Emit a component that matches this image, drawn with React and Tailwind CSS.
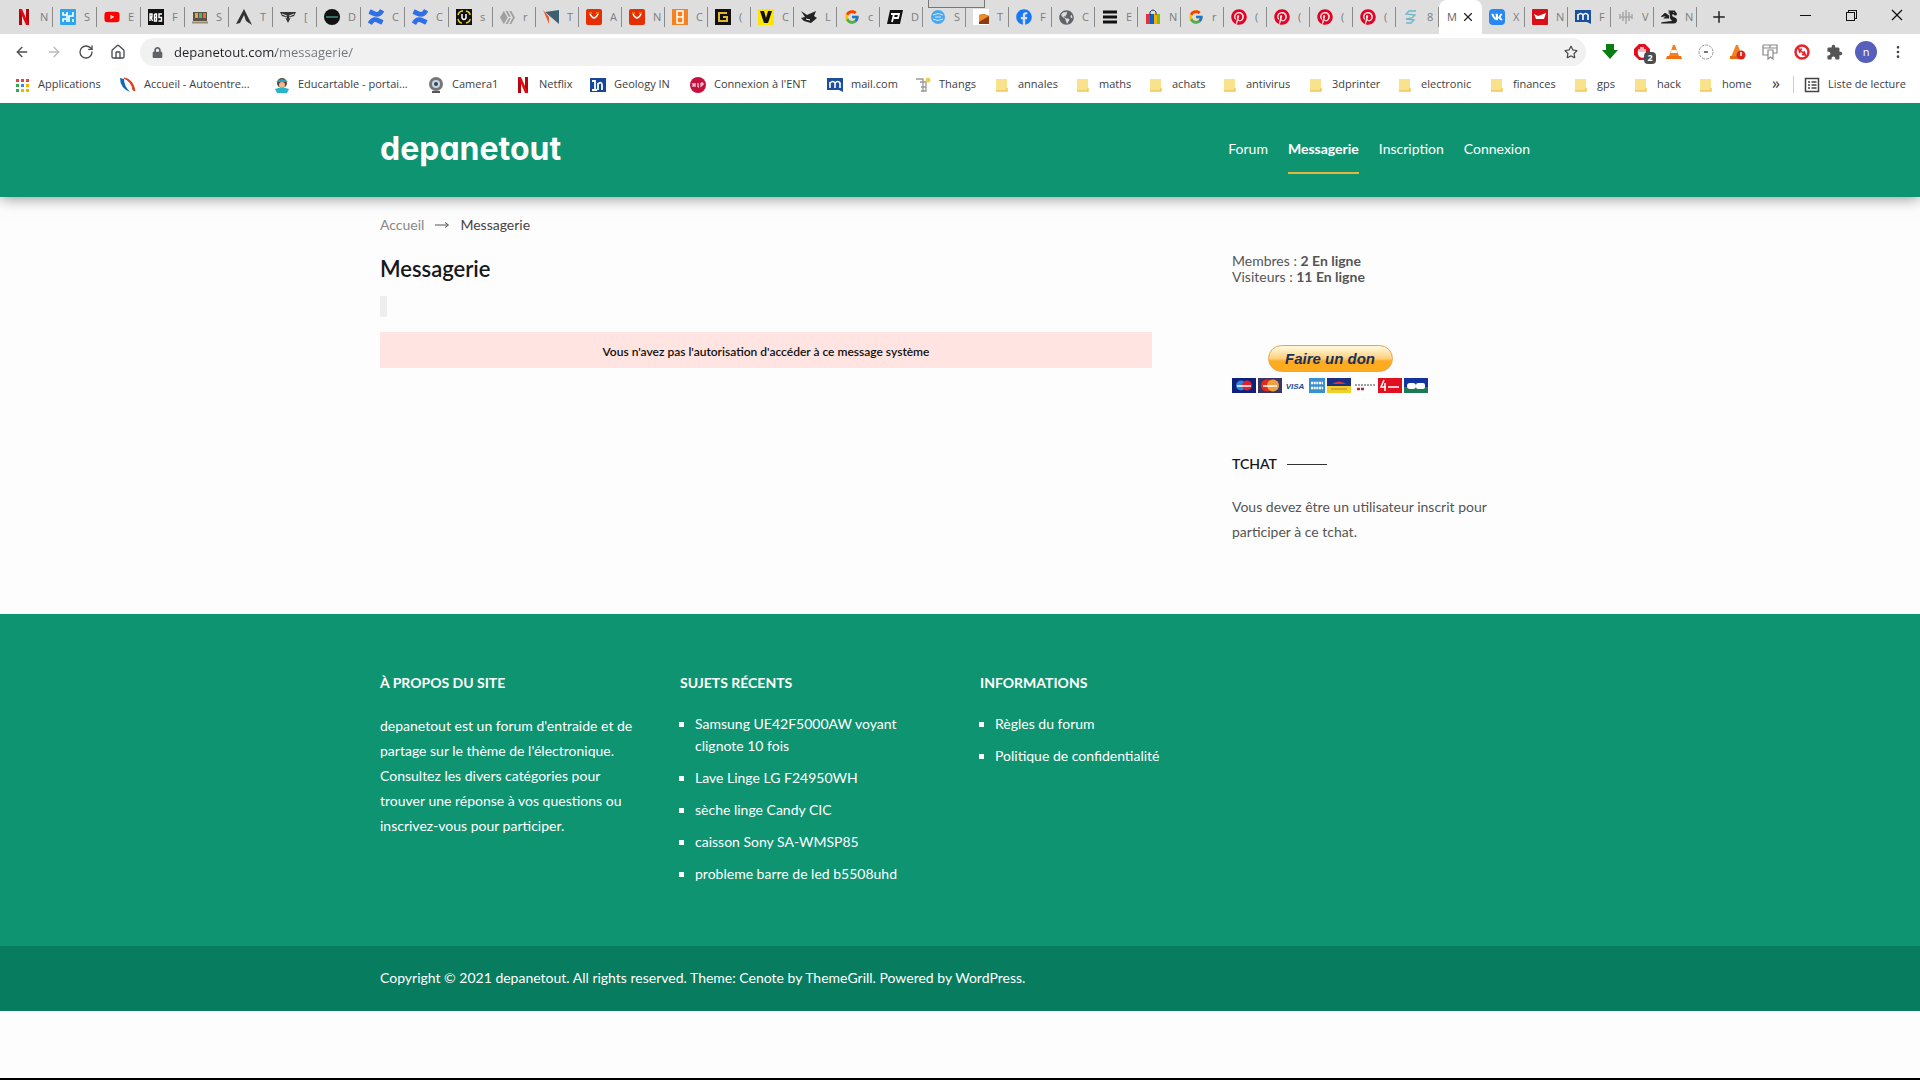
import { FaFacebook, FaPinterest, FaVk, FaYoutube, FaGlobeAmericas, FaDragon, FaRegStar, FaLock, FaHive } from "react-icons/fa";
import { FcGoogle } from "react-icons/fc";
import { MdExtension } from "react-icons/md";
import { SiNetflix, SiConfluence } from "react-icons/si";
import { VscChromeMinimize, VscChromeRestore, VscChromeClose } from "react-icons/vsc";
import { ArrowLeft, ArrowRight, RotateCw, House, Plus, X, EllipsisVertical } from "lucide-react";

/* ---------- favicons ---------- */

const Svg = ({ children, size = 16 }) => (
  <svg width={size} height={size} viewBox="0 0 16 16" className="shrink-0" aria-hidden="true">{children}</svg>
);

const Netflix = () => (
  <Svg>
    <path d="M3 0h3v16H3zM10 0h3v16h-3z" fill="#b1060f" />
    <path d="M3 0h3l7 16h-3z" fill="#e50914" />
  </Svg>
);

const BlueS = () => (
  <Svg>
    <rect width="16" height="16" rx="1" fill="#2ba5f0" />
    <path d="M3 3v3h4M3 13v-3h3M7 3v10M13 3v4H9v6M13 10v3" stroke="#fff" strokeWidth="1.6" fill="none" />
  </Svg>
);
const Rbs = () => (
  <Svg>
    <rect width="16" height="16" fill="#111" />
    <path d="M2 12V5h2v3H2m1 0l1.500 4M6.500 5v7h2V5h-2m0 3.500h2M14 5h-3v3.500h2.500V12h-3" stroke="#fff" strokeWidth="1.400" fill="none" />
  </Svg>
);
const Shop = () => (
  <Svg>
    <path d="M1 3h14v9H1z" fill="#5a5048" />
    <rect x="3" y="4" width="3" height="5" fill="#e8a33a" />
    <rect x="7" y="4" width="3" height="5" fill="#4fb56b" />
    <rect x="11" y="4" width="3" height="5" fill="#e0703a" />
    <path d="M0 13.500h16" stroke="#9a8a70" strokeWidth="2" />
  </Svg>
);
const Arrowhead = () => <Svg><path d="M8 0l8 16-6-4-2-6-4 8-4 1z" fill="#333" /></Svg>;
const Wings = () => (
  <Svg>
    <path d="M0 3h16l-2 4-3 1-3 6-3-6-3-1z" fill="#333" />
    <path d="M2 5l5 2M14 5L9 7M5 8l2 1M11 8l-2 1" stroke="#ddd" fill="none" />
  </Svg>
);
const BlackDisc = () => <Svg><circle cx="8" cy="8" r="8" fill="#111" /><path d="M2 8h12" stroke="#3f8f86" strokeWidth="1.500" /></Svg>;
const Confluence = () => <SiConfluence size={16} color="#2f6fe8" className="shrink-0" />;
const YellowU = () => (
  <Svg>
    <rect width="16" height="16" fill="#111" />
    <path d="M2 6Q3 2 7 2M10 2q4 1 4 4M2 10q1 4 4 4M10 14q4-1 4-4" stroke="#e8d21e" strokeWidth="1.500" fill="none" />
    <path d="M6 5v4q2 3 4 0V5" stroke="#fff" strokeWidth="1.500" fill="none" />
  </Svg>
);
const GreyCloud = () => <FaHive size={15} color="#a0a0a0" className="shrink-0" />;
const Telescope = () => (
  <Svg>
    <path d="M0 1l6 14V8z" fill="#f05a30" />
    <path d="M2 3l14-2v14z" fill="#3d6070" />
  </Svg>
);
const Ali = () => (
  <Svg>
    <rect width="16" height="16" rx="2" fill="#e62e04" />
    <path d="M4 5q4 8 8 0" stroke="#fff" strokeWidth="1.500" fill="none" />
    <path d="M3 4h3M10 4h3" stroke="#f7b500" />
  </Svg>
);
const OrangeB = () => (
  <Svg>
    <rect width="16" height="16" fill="#f58220" />
    <path d="M5 2h6v12H5zM5 8h6" stroke="#fff" strokeWidth="1.500" fill="none" />
  </Svg>
);
const GoldG = () => (
  <Svg>
    <rect width="16" height="16" fill="#111" />
    <path d="M12 4H4v8h8V8H8" stroke="#e3b72c" strokeWidth="2" fill="none" />
  </Svg>
);
const YellowV = () => <Svg><rect width="16" height="16" fill="#ffe600" /><path d="M2 2h4l2 7 2-7h4l-4 12H6z" fill="#111" /></Svg>;
const Fox = () => <Svg><path d="M0 2l6 4 9-4-2 5 3 2-6 5-7-2-3-3 4-1z" fill="#222" /><path d="M5 10l4 1" stroke="#fff" /></Svg>;
const Google = () => <FcGoogle size={16} className="shrink-0" />;
const DarkP = () => (
  <Svg>
    <path d="M3 1h13l-3 14H0z" fill="#111" />
    <path d="M4 5h8l-1 4H7M7 5L5 13" stroke="#fff" strokeWidth="1.800" fill="none" />
  </Svg>
);
const BlueGlobe = () => (
  <Svg>
    <circle cx="8" cy="8" r="7" fill="#4aa8f0" />
    <path d="M3 6q5-3 10 0M3 10q5 3 10 0M5 8h6" stroke="#cfe8ff" fill="none" />
  </Svg>
);
const Cube = () => (
  <Svg>
    <rect width="16" height="16" fill="#fff" />
    <path d="M6 6l5-1 5 2v8H6z" fill="#8a3b12" />
    <path d="M6 6l5-1 5 2-10 6z" fill="#f08a24" />
  </Svg>
);
const Facebook = () => <FaFacebook size={16} color="#1877f2" className="shrink-0" />;
const GreyGlobe = () => <FaGlobeAmericas size={15} color="#5f6368" className="shrink-0" />;
const Bars = () => <Svg><path d="M1 3h14M1 8h14M1 13h14" stroke="#111" strokeWidth="3" /></Svg>;
const Bag = () => (
  <Svg>
    <path d="M1 5h4v10H1z" fill="#e53238" />
    <path d="M5 5h4v10H5z" fill="#0064d2" />
    <path d="M9 5h3v10H9z" fill="#f5af02" />
    <path d="M12 5h3v10h-3z" fill="#86b817" />
    <path d="M5 6V3q3-4 6 0v3" stroke="#333" fill="none" />
  </Svg>
);
const Pinterest = () => <FaPinterest size={16} color="#e60023" className="shrink-0" />;
const Waves = () => <Svg><path d="M13 2H6L3 5l9 1-3 3-6 1 8 1-3 3H3" stroke="#6cb8c8" strokeWidth="1.300" fill="none" /></Svg>;
const Vk = () => (
  <span className="flex size-4 shrink-0 items-center justify-center rounded bg-[#2787f5]"><FaVk size={12} color="#fff" /></span>
);
const RedBox = () => <Svg><rect width="16" height="16" rx="1" fill="#d81118" /><path d="M2 5l4 2 8-3-2 6H4z" fill="#fff" /></Svg>;
const MailM = () => (
  <Svg>
    <path d="M0 1h16v14l-4-2H0z" fill="#1c4f9c" />
    <path d="M3 11V5M3 6q3-3 5 0v5M8 6q3-3 5 0v5" stroke="#fff" strokeWidth="1.600" fill="none" />
  </Svg>
);
const GreyBrain = () => <Svg><path d="M8 1v14M5 3v9M2 5v5M11 3v9M14 5v5M2 8h12" stroke="#a8a8a8" strokeWidth="1.500" /></Svg>;
const Skull = () => <FaDragon size={16} color="#222" className="shrink-0" />;
const Youtube = () => <FaYoutube size={16} color="#f00" className="shrink-0" />;

// the first tabs are one pixel wider than the others
const TABS = [
  { icon: Netflix, t: "N", w: "w-11" }, { icon: BlueS, t: "S", w: "w-11" }, { icon: Youtube, t: "E", w: "w-11" },
  { icon: Rbs, t: "F", w: "w-11" }, { icon: Shop, t: "S", w: "w-11" }, { icon: Arrowhead, t: "T", w: "w-11" },
  { icon: Wings, t: "[", w: "w-11" }, { icon: BlackDisc, t: "D", w: "w-11" }, { icon: Confluence, t: "C", w: "w-11" },
  { icon: Confluence, t: "C", w: "w-11" }, { icon: YellowU, t: "s", w: "w-11" },
  { icon: GreyCloud, t: "r" }, { icon: Telescope, t: "T" }, { icon: Ali, t: "A" }, { icon: Ali, t: "N" },
  { icon: OrangeB, t: "C" }, { icon: GoldG, t: "(" }, { icon: YellowV, t: "C" }, { icon: Fox, t: "L" },
  { icon: Google, t: "c" }, { icon: DarkP, t: "D" }, { icon: BlueGlobe, t: "S" }, { icon: Cube, t: "T" },
  { icon: Facebook, t: "F" }, { icon: GreyGlobe, t: "C" }, { icon: Bars, t: "E" }, { icon: Bag, t: "N" },
  { icon: Google, t: "r" }, { icon: Pinterest, t: "(" }, { icon: Pinterest, t: "(" }, { icon: Pinterest, t: "(" },
  { icon: Pinterest, t: "(" }, { icon: Waves, t: "8" },
  { active: true, t: "M" },
  { icon: Vk, t: "X" }, { icon: RedBox, t: "N" }, { icon: MailM, t: "F" }, { icon: GreyBrain, t: "V" }, { icon: Skull, t: "N" },
];

function Tab({ tab }) {
  if (tab.active) {
    return (
      <button type="button" className="flex h-[34px] w-[43px] items-center gap-1 rounded-t-lg bg-white pl-2 text-[11px] text-[#5f6368]">
        {tab.t}
        <X size={14} color="#222" className="shrink-0" />
      </button>
    );
  }
  const Icon = tab.icon;
  return (
    <button type="button" className={`flex h-[34px] items-center ${tab.w || "w-[43px]"}`}>
      <span className="flex h-5 flex-1 items-center gap-2 border-r border-[#8a8a8a] pl-[7px] text-[11px] text-[#7a7d80]">
        <Icon />
        {tab.t}
      </span>
    </button>
  );
}

function TabStrip() {
  return (
    <div className="relative flex h-[34px] items-center bg-[#dedede] pl-[9px]">
      {TABS.map((tab, i) => <Tab key={i} tab={tab} />)}
      <button type="button" aria-label="Nouvel onglet" className="ml-3 p-px"><Plus size={18} color="#222" /></button>
      <div className="ml-auto flex items-center gap-[30px] pr-[15px] pb-1">
        <button type="button" aria-label="Réduire"><VscChromeMinimize size={16} color="#111" /></button>
        <button type="button" aria-label="Restaurer"><VscChromeRestore size={16} color="#111" /></button>
        <button type="button" aria-label="Fermer"><VscChromeClose size={16} color="#111" /></button>
      </div>
      <div className="absolute top-0 left-[928px] h-2 w-[57px] border border-t-0 border-[#777] bg-[#d8d8d8]" />
    </div>
  );
}

/* ---------- toolbar ---------- */

const Download = () => <Svg><path d="M4 0h8v6h4l-8 9-8-9h4z" fill="#0a7d12" /></Svg>;
const Blocker = () => (
  <span className="relative flex">
    <Svg>
      <path d="M5 0h6l5 5v6l-5 5H5l-5-5V5z" fill="#e01020" />
      <path d="M5 9V5M7 8V3M9 8V3M11 9V5M4.500 8q0 5 3.500 5t3.500-4z" stroke="#fff" strokeWidth="1.400" fill="#fff" />
    </Svg>
    <span className="absolute top-2 left-2.5 flex size-3 items-center justify-center rounded-sm bg-[#4a4d50] text-[9px] font-bold text-white">2</span>
  </span>
);
const Cone = () => (
  <Svg>
    <path d="M7 1h2l4 11H3z" fill="#f58220" />
    <path d="M5.500 6h5l1 3h-7z" fill="#fff" />
    <path d="M1 12h14l1 3H0z" fill="#f07010" />
  </Svg>
);
const CircleDash = () => <Svg><circle cx="8" cy="8" r="7" stroke="#999" fill="none" strokeDasharray="3 1" /><path d="M6 8h4" stroke="#777" strokeWidth="2" /></Svg>;
const ConeAlert = () => (
  <Svg>
    <path d="M6 1h2l4 12H1z" fill="#f58220" />
    <path d="M0 12h9v3H0z" fill="#e86a10" />
    <circle cx="11" cy="11" r="4.500" fill="#d8281c" />
    <path d="M11 8v4" stroke="#fff" strokeWidth="1.500" />
  </Svg>
);
const Layers = () => <Svg><path d="M1 1h14v8h-4M1 1v10h5M1 4h14M6 6h5v9L8.500 13 6 15zM8 1v3" stroke="#888" strokeWidth="1.200" fill="none" /></Svg>;
const NoLink = () => (
  <Svg>
    <circle cx="8" cy="8" r="6.500" stroke="#e8252c" strokeWidth="2.500" fill="none" />
    <path d="M4 4l8 8M6 9l-1-3 3-1M10 7l1 3-3 1" stroke="#e8252c" strokeWidth="1.600" fill="none" />
  </Svg>
);
const Puzzle = () => <MdExtension size={17} color="#555" className="shrink-0" />;

const EXTENSIONS = [
  ["Téléchargement", Download], ["Bloqueur", Blocker], ["VLC", Cone], ["Capture", CircleDash],
  ["Alerte", ConeAlert], ["Calques", Layers], ["Liens", NoLink], ["Extensions", Puzzle],
];

function Toolbar() {
  return (
    <div className="flex h-9 items-center bg-white px-[14px]">
      <div className="flex items-center gap-4 text-[#4a4d50]">
        <button type="button" aria-label="Précédent"><ArrowLeft size={16} /></button>
        <button type="button" aria-label="Suivant" className="text-[#b8babd]"><ArrowRight size={16} /></button>
        <button type="button" aria-label="Actualiser"><RotateCw size={16} /></button>
        <button type="button" aria-label="Accueil"><House size={16} /></button>
      </div>
      <div className="ml-[14px] flex h-7 flex-1 items-center gap-[11px] rounded-full bg-[#f1f1f1] pr-2 pl-3">
        <FaLock size={11} color="#5f6368" />
        <input
          aria-label="Adresse"
          defaultValue="depanetout.com/messagerie/"
          className="min-w-0 flex-1 bg-[linear-gradient(90deg,#202124_102px,#70757a_102px)] bg-clip-text text-[13px] leading-5 text-transparent outline-none"
        />
        <button type="button" aria-label="Ajouter aux favoris"><FaRegStar size={14} color="#444" /></button>
      </div>
      <div className="ml-4 flex items-center gap-4">
        {EXTENSIONS.map(([name, Icon]) => (
          <button key={name} type="button" aria-label={name} className="flex size-4 items-center justify-center"><Icon /></button>
        ))}
      </div>
      <button type="button" className="ml-[13px] flex size-[22px] items-center justify-center rounded-full bg-[#5560bd] text-[11px] text-white">n</button>
      <button type="button" aria-label="Menu" className="ml-[13px]"><EllipsisVertical size={16} color="#444" /></button>
    </div>
  );
}

/* ---------- bookmarks ---------- */

const Apps = () => (
  <Svg>
    <path d="M2 2h3v3H2zM7 2h3v3H7zM12 2h3v3h-3z" fill="#e8453c" />
    <path d="M2 7h3v3H2zM2 12h3v3H2z" fill="#34a853" />
    <path d="M7 7h3v3H7z" fill="#4285f4" />
    <path d="M12 7h3v3h-3zM7 12h3v3H7zM12 12h3v3h-3z" fill="#f0b400" />
  </Svg>
);
const Swoosh = () => (
  <Svg>
    <path d="M0 1q0 10 10 14Q4 9 4 2z" fill="#1667b7" />
    <path d="M4 1q9 1 11 13l-2-1Q12 5 4 1z" fill="#e0401c" stroke="#e0401c" />
  </Svg>
);
const Kid = () => (
  <Svg>
    <circle cx="8" cy="6" r="5" fill="#5a4632" />
    <circle cx="8" cy="8" r="3" fill="#f0b890" />
    <path d="M1 12q7-3 14 0l-2 4H3z" fill="#28b4c8" />
    <path d="M2 5q6-6 12 0z" fill="#28a0c0" />
  </Svg>
);
const Webcam = () => (
  <Svg>
    <circle cx="8" cy="7" r="7" fill="#777" />
    <circle cx="8" cy="7" r="4" fill="#c8d8e8" />
    <circle cx="8" cy="7" r="2" fill="#345" />
    <path d="M4 15h8" stroke="#555" strokeWidth="2" />
  </Svg>
);
const Geology = () => (
  <Svg>
    <rect y="1" width="16" height="14" fill="#17479a" />
    <path d="M2 4h3v9M2 13h5M8 13V6M8 7q4-3 4 1v5" stroke="#fff" strokeWidth="1.800" fill="none" />
  </Svg>
);
const Ent = () => <Svg><circle cx="8" cy="8" r="8" fill="#c8103e" /><path d="M3 6v4M5 6v4M3 8h2M8 6v4h1M11 10V6h2v2h-2" stroke="#fff" fill="none" /></Svg>;
const Thangs = () => (
  <Svg>
    <path d="M1 2h7v3M8 5v10M5 5h7M6 10h5M6 14h5V6" stroke="#999" strokeWidth="1.300" fill="none" />
    <circle cx="13" cy="3" r="2.500" fill="#f5d040" />
  </Svg>
);
const Folder = () => (
  <Svg>
    <path d="M2 2h11v12H2z" fill="#fae28c" />
    <path d="M13 11v3H2" stroke="#efc75a" strokeWidth="1.500" fill="none" />
  </Svg>
);

const BOOKMARKS = [
  ["Applications", Apps, "w-[106px]"],
  ["Accueil - Autoentre...", Swoosh, "w-[154px]"],
  ["Educartable - portai...", Kid, "w-[154px]"],
  ["Camera1", Webcam, "w-[87px]"],
  ["Netflix", Netflix, "w-[75px]"],
  ["Geology IN", Geology, "w-[100px]"],
  ["Connexion à l'ENT", Ent, "w-[137px]"],
  ["mail.com", MailM, "w-[88px]"],
  ["Thangs", Thangs, "w-[79px]"],
  ["annales", Folder, "w-[81px]"],
  ["maths", Folder, "w-[73px]"],
  ["achats", Folder, "w-[74px]"],
  ["antivirus", Folder, "w-[86px]"],
  ["3dprinter", Folder, "w-[89px]"],
  ["electronic", Folder, "w-[92px]"],
  ["finances", Folder, "w-[84px]"],
  ["gps", Folder, "w-[60px]"],
  ["hack", Folder, "w-[65px]"],
  ["home", Folder, "w-[70px]"],
];

function BookmarksBar() {
  return (
    <nav aria-label="Favoris" className="flex h-[33px] items-center bg-white pb-1 pl-[14px] text-[11px] text-[#3c4043]">
      {BOOKMARKS.map(([label, Icon, w]) => (
        <a key={label} href="#" className={`flex items-center gap-2 whitespace-nowrap ${w}`}>
          <Icon />{label}
        </a>
      ))}
      <button type="button" className="ml-1 pb-1 text-base leading-4 text-[#333]">»</button>
      <a href="#" className="ml-auto flex items-center gap-2 border-l border-[#ccc] pr-[14px] pl-[10px] whitespace-nowrap">
        <Svg>
          <path d="M1.500 1.500h13v13h-13z" stroke="#444" strokeWidth="1.500" fill="none" />
          <path d="M4 5h2M4 8h2M4 11h2M7.500 5h5M7.500 8h5M7.500 11h5" stroke="#444" strokeWidth="1.300" />
        </Svg>
        Liste de lecture
      </a>
    </nav>
  );
}

/* ---------- site ---------- */

const NAV = ["Forum", "Messagerie", "Inscription", "Connexion"];

function SiteHeader() {
  return (
    <header className="bg-[#0f9471] shadow-[0_0_15px_rgba(0,0,0,0.5)]">
      <div className="mx-auto flex h-[94px] max-w-[1160px] items-center justify-between pb-[2px]">
        <a href="#" className="font-['Inter'] text-[32px] leading-10 font-bold text-white [font-feature-settings:'cv11']">depanetout</a>
        <nav className="flex gap-5 pr-[10px] text-sm text-white">
          {NAV.map((n) => (
            <a
              key={n}
              href="#"
              className={n === "Messagerie"
                ? "border-y-2 border-t-transparent border-b-[#e5b53c] py-[13px] font-bold"
                : "border-y-2 border-transparent py-[13px]"}
            >
              {n}
            </a>
          ))}
        </nav>
      </div>
    </header>
  );
}

const Card = ({ bg, w = "w-6", children }) => (
  <svg viewBox="0 0 24 15" preserveAspectRatio="none" className={`h-[15px] ${w}`} aria-hidden="true">
    <rect width="24" height="15" fill={bg} />
    {children}
  </svg>
);

function PaymentCards() {
  return (
    <div className="flex justify-between">
      <Card bg="#10207a">
        <circle cx="9" cy="7.500" r="5" fill="#2a86e0" /><circle cx="15" cy="7.500" r="5" fill="#e0202c" />
        <path d="M5 8h14" stroke="#fff" strokeWidth="1.500" />
      </Card>
      <Card bg="#3b3566">
        <circle cx="9" cy="7.500" r="6" fill="#e02c20" /><circle cx="15" cy="7.500" r="6" fill="#f0a040" />
        <path d="M5 8h14" stroke="#fff" strokeWidth="1.500" />
      </Card>
      <Card bg="#fff">
        <text x="12" y="11" textAnchor="middle" fontSize="8" fontWeight="700" fontStyle="italic" fill="#1a4a9c" fontFamily="Liberation Sans, sans-serif">VISA</text>
      </Card>
      <Card bg="#3a8fd0" w="w-4">
        <path d="M3 5h18M3 10h18" stroke="#fff" strokeWidth="2.500" strokeDasharray="3 1" />
      </Card>
      <Card bg="#f3cf2a">
        <rect width="24" height="8" fill="#1c2f80" /><path d="M5 6q7-5 14 0z" fill="#e03030" />
        <path d="M4 11h16" stroke="#b08a20" />
      </Card>
      <Card bg="#fff">
        <path d="M2 7h20" stroke="#a0a0a0" strokeWidth="2" strokeDasharray="2 1" />
        <path d="M4 11h3M8 11h3" stroke="#c02040" strokeWidth="2.500" />
      </Card>
      <Card bg="#e01020">
        <path d="M6 2L3 9h5M7 5v8M10 9h11" stroke="#fff" strokeWidth="1.500" fill="none" />
      </Card>
      <Card bg="#12349c">
        <rect y="9" width="24" height="6" fill="#1c7a54" />
        <rect x="3" y="5" width="9" height="6" rx="3" fill="#fff" /><rect x="12" y="5" width="9" height="6" rx="2" fill="#fff" />
      </Card>
    </div>
  );
}

function Sidebar() {
  return (
    <aside className="w-[308px] shrink-0 pt-14 text-sm text-[#555]">
      <p className="leading-4">Membres : <strong>2 En ligne</strong></p>
      <p className="leading-4">Visiteurs : <strong>11 En ligne</strong></p>
      <div className="mt-[60px] flex w-[196px] flex-col gap-[6px]">
        <button
          type="button"
          className="h-[27px] w-[125px] self-center rounded-full border border-[#e8a54a] bg-linear-to-b from-[#fff3d0] from-10% via-[#ffcf78] via-50% to-[#ffab1f] to-60% font-['Liberation_Sans',sans-serif] text-[15px] leading-6 font-bold whitespace-nowrap text-[#17305c] italic"
        >
          Faire un don
        </button>
        <PaymentCards />
      </div>
      <h2 className="mt-[61px] flex items-center gap-[10px] leading-5 font-semibold text-[#16181a]">
        TCHAT
        <span className="h-px w-10 bg-[#333]" />
      </h2>
      <p className="mt-5 w-[270px] leading-[25px]">Vous devez être un utilisateur inscrit pour participer à ce tchat.</p>
    </aside>
  );
}

function Content() {
  return (
    <main className="mx-auto flex w-full max-w-[1160px] justify-between pb-[70px]">
      <div className="w-[772px]">
        <p className="flex items-center gap-[10px] pt-[18px] text-sm leading-5 text-[#444]">
          <a href="#" className="text-[#888]">Accueil</a>
          <svg width="16" height="8" viewBox="0 0 16 8" aria-hidden="true">
            <path d="M1 4h13M11 1.500L14.500 4 11 6.500" stroke="#555" fill="none" />
          </svg>
          <span>Messagerie</span>
        </p>
        <h1 className="mt-[18px] text-[22px] leading-8 font-semibold text-[#16181a]">Messagerie</h1>
        <div className="mt-[11px] h-[21px] w-[7px] bg-[#eee]" />
        <p className="mt-[15px] bg-[#ffe4e1] pt-3 pb-2 text-center text-xs leading-4 font-semibold text-[#111]">
          Vous n'avez pas l'autorisation d'accéder à ce message système
        </p>
      </div>
      <Sidebar />
    </main>
  );
}

const TOPICS = [
  "Samsung UE42F5000AW voyant clignote 10 fois", "Lave Linge LG F24950WH", "sèche linge Candy CIC",
  "caisson Sony SA-WMSP85", "probleme barre de led b5508uhd",
];
const INFOS = ["Règles du forum", "Politique de confidentialité"];

const FooterList = ({ title, items }) => (
  <section className="w-[260px]">
    <h3 className="leading-5 font-bold uppercase">{title}</h3>
    <ul className="mt-5 flex list-[square] flex-col gap-[10px] pr-4 pl-[15px] leading-[22px]">
      {items.map((it) => <li key={it}><a href="#">{it}</a></li>)}
    </ul>
  </section>
);

function SiteFooter() {
  return (
    <footer className="text-sm text-white">
      <div className="bg-[#0f9471]">
        <div className="mx-auto flex max-w-[1160px] gap-10 pt-[59px] pb-[61px]">
          <section className="w-[260px]">
            <h3 className="leading-5 font-bold uppercase">À propos du site</h3>
            <p className="mt-5 leading-[25px]">
              depanetout est un forum d'entraide et de partage sur le thème de l'électronique. Consultez les divers catégories pour trouver une réponse à vos questions ou inscrivez-vous pour participer.
            </p>
          </section>
          <FooterList title="Sujets récents" items={TOPICS} />
          <FooterList title="Informations" items={INFOS} />
        </div>
      </div>
      <div className="bg-[#077c5f]">
        <p className="mx-auto max-w-[1160px] pt-[22px] pb-[23px] leading-5">
          Copyright © 2021 <a href="#">depanetout</a>. All rights reserved. Theme: <a href="#">Cenote</a> by ThemeGrill. Powered by <a href="#">WordPress</a>.
        </p>
      </div>
    </footer>
  );
}

export default function App() {
  return (
    <div className="flex min-h-screen flex-col border-b-2 border-black bg-[#fdfdfd] font-['Lato',sans-serif]">
      <div className="relative z-10 font-['Open_Sans',sans-serif]">
        <TabStrip />
        <Toolbar />
        <BookmarksBar />
      </div>
      <SiteHeader />
      <Content />
      <SiteFooter />
    </div>
  );
}
